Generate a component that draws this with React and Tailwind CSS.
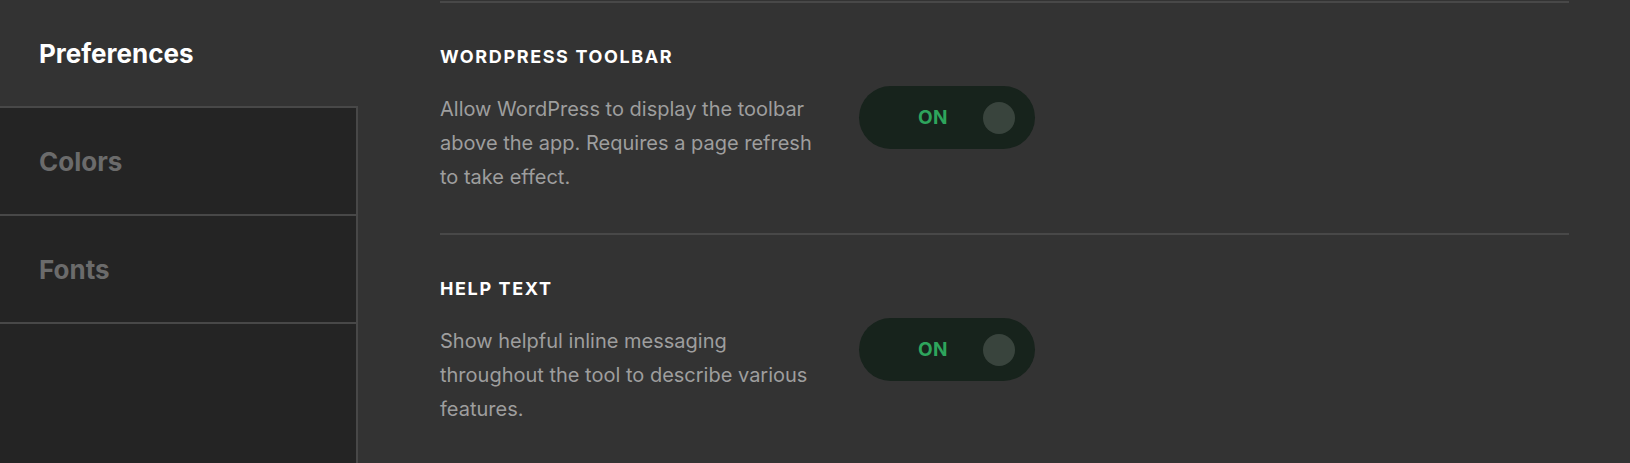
import React from "react";

const font = { fontFamily: "Inter, 'Noto Sans', 'Liberation Sans', sans-serif" };

function Toggle() {
  return (
    <div className="flex h-[63px] w-[176px] shrink-0 items-center rounded-full bg-[#17231c]">
      <span className="ml-[59px] text-[19px] font-bold leading-none tracking-[0.02em] text-[#2ea55c]">ON</span>
      <span className="ml-auto mr-[20px] h-[32px] w-[32px] rounded-full bg-[#39443d]" />
    </div>
  );
}

function Section({ title, lines }) {
  return (
    <div className="border-t-2 border-[#484848] pt-10 pb-[39px]">
      <div className="text-[18px] font-bold leading-[28px] tracking-[0.09em] text-white">{title}</div>
      <div className="mt-[15px] flex items-start">
        <p className="mt-[6px] w-[419px] shrink-0 text-[20px] leading-[34px] text-[#9e9e9e]">
          {lines.map((l, i) => (
            <React.Fragment key={i}>
              {l}
              {i < lines.length - 1 && <br />}
            </React.Fragment>
          ))}
        </p>
        <Toggle />
      </div>
    </div>
  );
}

export default function App() {
  const items = ["Colors", "Fonts"];
  return (
    <div className="flex h-[463px] w-full overflow-hidden bg-[#333333]" style={font}>
      <aside className="flex w-[358px] shrink-0 flex-col">
        <div className="flex h-[106px] items-center pl-[39px] text-[26px] font-bold text-white">Preferences</div>
        <div className="flex flex-1 flex-col border-r-2 border-[#484848] bg-[#242424]">
          {items.map((it) => (
            <div
              key={it}
              className="flex h-[108px] items-center border-t-2 border-[#484848] pl-[39px] text-[26px] font-bold text-[#6b6b6b]"
            >
              {it}
            </div>
          ))}
          <div className="flex-1 border-t-2 border-[#484848]" />
        </div>
      </aside>
      <main className="flex-1 pl-[82px] pr-[61px] pt-px">
        <Section
          title="WORDPRESS TOOLBAR"
          lines={["Allow WordPress to display the toolbar", "above the app. Requires a page refresh", "to take effect."]}
        />
        <Section
          title="HELP TEXT"
          lines={["Show helpful inline messaging", "throughout the tool to describe various", "features."]}
        />
      </main>
    </div>
  );
}
